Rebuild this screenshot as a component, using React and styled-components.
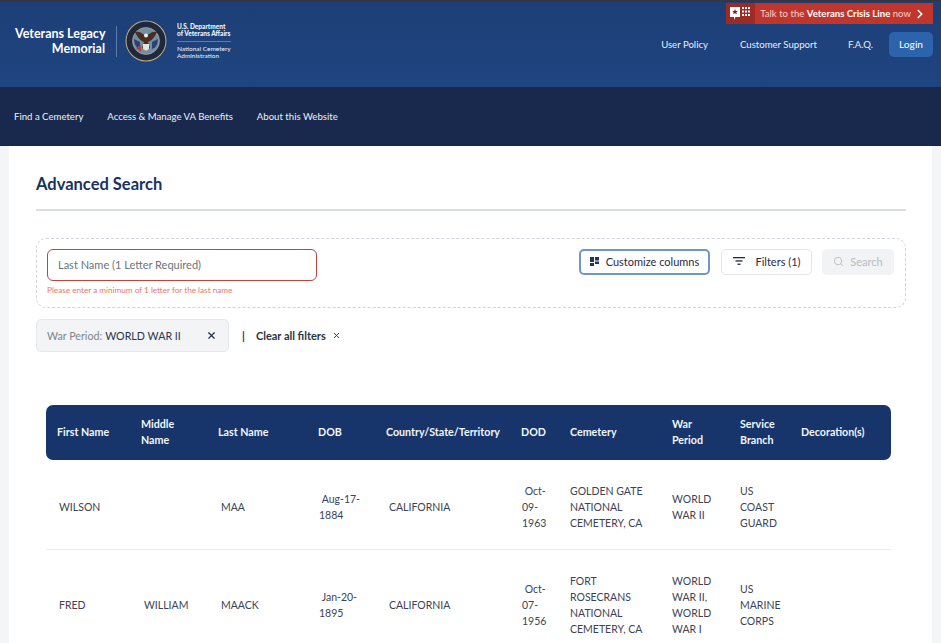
import React from "react";
import styled, { createGlobalStyle } from "styled-components";
import { X, Search, ChevronRight } from "lucide-react";

const GlobalStyle = createGlobalStyle`
  html, body {
    margin: 0;
    padding: 0;
    background: #f3f5f7;
    font-family: "Lato", "Noto Sans", "Liberation Sans", sans-serif;
    color: #1f2a44;
    overflow: hidden;
  }
`;

const Page = styled.div`
  width: 941px;
  height: 643px;
  overflow: hidden;
`;

const TopHeader = styled.header`
  height: 87px;
  box-sizing: border-box;
  border-top: 2px solid #3a3340;
  background: linear-gradient(180deg, #1d3f78 0%, #1f447f 100%);
  display: flex;
  justify-content: space-between;
  padding: 0 8px 0 15px;
`;

const Brand = styled.div`
  display: flex;
  align-items: center;
  height: 78px;
`;

const BrandName = styled.div`
  width: 90px;
  font-size: 12.5px;
  line-height: 15px;
  font-weight: 700;
  color: #fff;
  text-align: right;
  white-space: nowrap;
`;

const BrandDivider = styled.div`
  width: 1px;
  height: 31px;
  margin: 0 8px 0 11px;
  background: #5f7ba6;
`;

const DeptText = styled.div`
  margin-left: 10px;
  color: #f2f5fa;
  font-size: 6.5px;
  line-height: 7.5px;
`;

const DeptStrong = styled.div`
  font-weight: 900;
  padding-bottom: 3px;
  margin-bottom: 3px;
  border-bottom: 1px solid #5f7ba6;
`;

const TopRight = styled.div`
  display: flex;
  flex-direction: column;
  align-items: flex-end;
  padding-top: 1px;
`;

const CrisisBanner = styled.div`
  display: flex;
  align-items: center;
  height: 21px;
  background: #c0362c;
  color: #f6d3cd;
  font-size: 9.6px;
`;

const CrisisIcon = styled.div`
  display: flex;
  align-items: center;
  justify-content: center;
  width: 29px;
  height: 100%;
  background: #9c2a25;
`;

const CrisisLabel = styled.span`
  padding-left: 5px;
  white-space: nowrap;
  b {
    color: #fff;
    font-weight: 700;
  }
`;

const CrisisArrow = styled(ChevronRight)`
  margin: 0 6px 0 2px;
  color: #fff;
`;

const TopLinks = styled.nav`
  display: flex;
  align-items: center;
  margin-top: 8px;
  font-size: 9.6px;
  color: #e8eef7;
`;

const TopLink = styled.span`
  margin-right: ${(p) => p.$gap}px;
  margin-top: -1px;
  white-space: nowrap;
`;

const LoginButton = styled.button`
  width: 44px;
  height: 25px;
  border: 0;
  border-radius: 5px;
  background: #2b64ad;
  color: #fff;
  font: inherit;
  font-size: 10.2px;
  padding: 0 0 2px;
`;

const MainNav = styled.nav`
  height: 59px;
  box-sizing: border-box;
  border-bottom: 1px solid #11264a;
  background: #18294d;
  display: flex;
  align-items: center;
  padding-left: 14px;
  gap: 24px;
  font-size: 9.6px;
  color: #eef1f6;
`;

const Card = styled.main`
  margin: 0 9px;
  height: 497px;
  background: #fff;
  padding: 0 26px 0 27px;
  box-sizing: border-box;
`;

const Title = styled.h1`
  margin: 0;
  padding: 28px 0 14px;
  font-size: 16.5px;
  line-height: 21px;
  font-weight: 700;
  color: #17335f;
  border-bottom: 2px solid #d9dee1;
`;

const SearchBox = styled.section`
  margin-top: 27px;
  width: 870px;
  height: 70px;
  box-sizing: border-box;
  border: 1px dashed #cfd4d8;
  border-radius: 10px;
  padding: 10px 11px 10px 10px;
  display: flex;
  justify-content: space-between;
`;

const NameField = styled.div`
  width: 270px;
`;

const NameInput = styled.div`
  height: 32px;
  box-sizing: border-box;
  border: 1.5px solid #b9473c;
  border-radius: 6px;
  padding: 0 0 2px 10px;
  display: flex;
  align-items: center;
  font-size: 11px;
  color: #6d7278;
`;

const FieldError = styled.div`
  margin-top: 4px;
  font-size: 8.2px;
  line-height: 10px;
  color: #e07a70;
`;

const Actions = styled.div`
  display: flex;
  align-items: flex-start;
  gap: 10px;
`;

const ActionButton = styled.button`
  height: 26px;
  width: ${(p) => p.$width}px;
  margin-right: ${(p) => p.$mr || 0}px;
  box-sizing: border-box;
  border-radius: 5px;
  border: ${(p) => (p.$focused ? "2px solid #7096c8" : p.$disabled ? "0" : "1px solid #e3e6e9")};
  background: ${(p) => (p.$disabled ? "#f1f3f4" : "#fff")};
  color: ${(p) => (p.$disabled ? "#b7bcc0" : "#1f2a44")};
  font: inherit;
  font-size: 11px;
  display: flex;
  align-items: center;
  justify-content: center;
  gap: ${(p) => p.$gap}px;
  padding: 0 0 2px;
`;

const ChipRow = styled.div`
  margin-top: 11px;
  display: flex;
  align-items: center;
`;

const Chip = styled.div`
  width: 193px;
  height: 33px;
  box-sizing: border-box;
  border: 1px solid #e6e9eb;
  border-radius: 5px;
  background: #f2f4f5;
  padding: 0 11px 0 10px;
  display: flex;
  align-items: center;
  font-size: 10.7px;
  color: #808589;
`;

const ChipValue = styled.span`
  margin-left: 3px;
  flex: 1;
  color: #2a3550;
`;

const ClearFilters = styled.div`
  display: flex;
  align-items: center;
  margin-left: 13px;
  font-size: 11px;
  font-weight: 700;
  color: #2a3340;
`;

const Bar = styled.span`
  margin-right: 11px;
  font-weight: 700;
`;

const ClearLabel = styled.span`
  margin-right: 6px;
`;

const Table = styled.div`
  margin: 53px 0 0 10px;
  width: 845px;
`;

const columns = "84px 77px 100px 68px 135px 49px 102px 68px 61px 101px";

const HeadRow = styled.div`
  display: grid;
  grid-template-columns: ${columns};
  align-items: center;
  height: 55px;
  box-sizing: border-box;
  padding-bottom: 2px;
  border-radius: 7px;
  background: #17356a;
  color: #f2f5fa;
  font-size: 10.7px;
  line-height: 16px;
  font-weight: 700;
`;

const HeadCell = styled.div`
  padding-left: 11px;
  padding-right: 4px;
  white-space: pre-line;
`;

const Row = styled.div`
  display: grid;
  grid-template-columns: ${columns};
  align-items: center;
  height: ${(p) => p.$height}px;
  box-sizing: border-box;
  padding-top: ${(p) => p.$pt || 0}px;
  border-bottom: 1px solid #e9ecee;
  font-size: 10.5px;
  line-height: 16px;
  color: #3c4354;
`;

const Cell = styled.div`
  padding-left: ${(p) => p.$pl ?? 14}px;
  white-space: pre-wrap;
`;

const heads = [
  "First Name",
  "Middle\nName",
  "Last Name",
  "DOB",
  "Country/State/Territory",
  "DOD",
  "Cemetery",
  "War\nPeriod",
  "Service\nBranch",
  "Decoration(s)",
];

const people = [
  {
    height: 90,
    pt: 4,
    first: "WILSON",
    middle: "",
    last: "MAA",
    dob: " Aug-17-\n1884",
    state: "CALIFORNIA",
    dod: " Oct-\n09-\n1963",
    cemetery: "GOLDEN GATE\nNATIONAL\nCEMETERY, CA",
    war: "WORLD\nWAR II",
    branch: "US\nCOAST\nGUARD",
  },
  {
    height: 110,
    first: "FRED",
    middle: "WILLIAM",
    last: "MAACK",
    dob: " Jan-20-\n1895",
    state: "CALIFORNIA",
    dod: " Oct-\n07-\n1956",
    cemetery: "FORT\nROSECRANS\nNATIONAL\nCEMETERY, CA",
    war: "WORLD\nWAR II,\nWORLD\nWAR I",
    branch: "US\nMARINE\nCORPS",
  },
];

const VaSeal = () => (
  <svg width="42" height="42" viewBox="0 0 42 42">
    <circle cx="21" cy="21" r="20.5" fill="#c9b27a" />
    <circle cx="21" cy="21" r="19.5" fill="#20283f" />
    <circle cx="21" cy="21" r="13.5" fill="#6f8fa8" stroke="#c9b27a" strokeWidth="0.6" />
    <path d="M9 19l6 3v7l-3-1.500A13 13 0 0 1 9 19z" fill="#2b3f78" />
    <path d="M11 28l5-3v7z" fill="#b4403c" />
    <path d="M33 19l-6 3v7l3-1.500A13 13 0 0 0 33 19z" fill="#2b3f78" />
    <path d="M21 17c-3-4-7-6-11-5 2 4 4 8 9 10l-2 6 4 3 4-3-2-6c5-2 7-6 9-10-4-1-8 1-11 5z" fill="#4a2f20" />
    <circle cx="21" cy="15.500" r="2" fill="#f2efe6" />
    <path d="M18 24h6v5l-3 2-3-2z" fill="#e8e4da" />
  </svg>
);

const CrisisGlyph = () => (
  <svg width="21" height="15" viewBox="0 0 21 15">
    <path d="M0 1h10v10H5.500L4 14v-3H0z" fill="#fff" />
    <path d="M5 3l.8 1.900 2 .1-1.500 1.300.5 2L5 7.200 3.200 8.300l.5-2L2.200 5l2-.1z" fill="#7d1f1c" />
    <g fill="#fff">
      <rect x="12" y="1" width="2" height="2" />
      <rect x="15" y="1" width="2" height="2" />
      <rect x="18" y="1" width="2" height="2" />
      <rect x="12" y="4.500" width="2" height="2" />
      <rect x="15" y="4.500" width="2" height="2" />
      <rect x="18" y="4.500" width="2" height="2" />
      <rect x="12" y="8" width="2" height="2" />
      <rect x="15" y="8" width="2" height="2" />
      <rect x="18" y="8" width="2" height="2" />
    </g>
  </svg>
);

const ColumnsGlyph = () => (
  <svg width="9" height="9" viewBox="0 0 9 9" fill="#1f3566">
    <rect width="4" height="5" />
    <rect x="5" width="4" height="3.500" />
    <rect y="6" width="4" height="3" />
    <rect x="5" y="4.500" width="4" height="2.500" />
  </svg>
);

const FilterGlyph = () => (
  <svg width="12" height="8" viewBox="0 0 12 8" fill="#1f2a44">
    <rect width="12" height="1.300" />
    <rect x="2.500" y="3.300" width="7" height="1.300" />
    <rect x="4.500" y="6.600" width="3" height="1.300" />
  </svg>
);

export default function App() {
  return (
    <Page>
      <GlobalStyle />
      <TopHeader>
        <Brand>
          <BrandName>
            Veterans Legacy
            <br />
            Memorial
          </BrandName>
          <BrandDivider />
          <VaSeal />
          <DeptText>
            <DeptStrong>
              U.S. Department
              <br />
              of Veterans Affairs
            </DeptStrong>
            National Cemetery
            <br />
            Administration
          </DeptText>
        </Brand>
        <TopRight>
          <CrisisBanner>
            <CrisisIcon>
              <CrisisGlyph />
            </CrisisIcon>
            <CrisisLabel>
              Talk to the <b>Veterans Crisis Line</b> now
            </CrisisLabel>
            <CrisisArrow size={14} strokeWidth={3} />
          </CrisisBanner>
          <TopLinks>
            <TopLink $gap={32}>User Policy</TopLink>
            <TopLink $gap={31}>Customer Support</TopLink>
            <TopLink $gap={16}>F.A.Q.</TopLink>
            <LoginButton>Login</LoginButton>
          </TopLinks>
        </TopRight>
      </TopHeader>
      <MainNav>
        <span>Find a Cemetery</span>
        <span>Access &amp; Manage VA Benefits</span>
        <span>About this Website</span>
      </MainNav>
      <Card>
        <Title>Advanced Search</Title>
        <SearchBox>
          <NameField>
            <NameInput>Last Name (1 Letter Required)</NameInput>
            <FieldError>Please enter a minimum of 1 letter for the last name</FieldError>
          </NameField>
          <Actions>
            <ActionButton $width={131} $gap={7} $mr={1} $focused>
              <ColumnsGlyph />
              Customize columns
            </ActionButton>
            <ActionButton $width={91} $gap={11}>
              <FilterGlyph />
              Filters (1)
            </ActionButton>
            <ActionButton $width={72} $gap={6} $disabled>
              <Search size={11} />
              Search
            </ActionButton>
          </Actions>
        </SearchBox>
        <ChipRow>
          <Chip>
            War Period:
            <ChipValue>WORLD WAR II</ChipValue>
            <X size={11} color="#1f2a44" strokeWidth={2.5} />
          </Chip>
          <ClearFilters>
            <Bar>|</Bar>
            <ClearLabel>Clear all filters</ClearLabel>
            <X size={9} strokeWidth={2.5} />
          </ClearFilters>
        </ChipRow>
        <Table>
          <HeadRow>
            {heads.map((h) => (
              <HeadCell key={h}>{h}</HeadCell>
            ))}
          </HeadRow>
          {people.map((p) => (
            <Row key={p.last} $height={p.height} $pt={p.pt}>
              <Cell $pl={13}>{p.first}</Cell>
              <Cell>{p.middle}</Cell>
              <Cell>{p.last}</Cell>
              <Cell $pl={12}>{p.dob}</Cell>
              <Cell>{p.state}</Cell>
              <Cell $pl={12}>{p.dod}</Cell>
              <Cell $pl={11}>{p.cemetery}</Cell>
              <Cell $pl={11}>{p.war}</Cell>
              <Cell $pl={11}>{p.branch}</Cell>
              <Cell />
            </Row>
          ))}
        </Table>
      </Card>
    </Page>
  );
}
